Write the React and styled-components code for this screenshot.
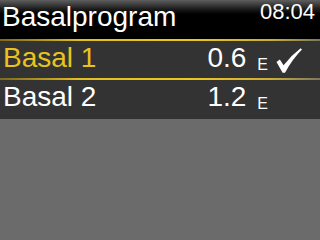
import styled, { createGlobalStyle } from "styled-components";

const Global = createGlobalStyle`
  html, body {
    margin: 0;
    padding: 0;
    background: #6b6b6b;
  }
  body {
    font-family: "Liberation Sans", Arial, sans-serif;
  }
`;

const Screen = styled.div`
  width: 320px;
  height: 240px;
  display: flex;
  flex-direction: column;
  background: #6b6b6b;
  overflow: hidden;
`;

const Header = styled.div`
  height: 39px;
  flex-shrink: 0;
  display: flex;
  justify-content: space-between;
  align-items: flex-start;
  padding: 0 5px 0 2px;
  background: linear-gradient(to bottom, #5e5e5e 0px, #1c1c1c 9px, #000 14px, #000 100%);
  color: #fff;
`;

const Title = styled.div`
  font-size: 28px;
  line-height: 28px;
  padding-top: 3px;
`;

const Clock = styled.div`
  font-size: 22px;
  line-height: 22px;
  padding-top: 1px;
`;

const GoldLine = styled.div`
  height: 2px;
  flex-shrink: 0;
  background: linear-gradient(
    to right,
    #7d6a1c 0%,
    #e4c01f 25%,
    #ecc81e 60%,
    #c9ad38 85%,
    #7c7660 100%
  );
`;

const Row = styled.div`
  height: ${(p) => p.$h}px;
  flex-shrink: 0;
  display: flex;
  align-items: flex-start;
  justify-content: space-between;
  padding: 3px 18px 0 3px;
  box-sizing: border-box;
  background: #333333;
  color: ${(p) => (p.$active ? "#e8c31d" : "#ffffff")};
`;

const Label = styled.div`
  font-size: 28px;
  line-height: 28px;
`;

const Right = styled.div`
  display: flex;
  align-items: flex-start;
  color: #fff;
`;

const Amount = styled.div`
  font-size: 28px;
  line-height: 28px;
  white-space: nowrap;
`;

const Unit = styled.span`
  font-size: 16px;
  margin-left: 11px;
  vertical-align: -3px;
`;

const CheckSlot = styled.div`
  width: 26px;
  height: 25px;
  margin-left: 8px;
  margin-top: 4px;
`;

const Rest = styled.div`
  flex: 1;
  background: #6b6b6b;
`;

function Check() {
  return (
    <svg width="26" height="25" viewBox="0 0 26 25">
      <path
        d="M0.5 14 L3.8 11.6 L7.6 17.2 Q15 7.5 24.6 0.2 L26 1.6 Q16.5 11 9 24.8 L6.6 24.8 Z"
        fill="#fff"
      />
    </svg>
  );
}

const programs = [
  { name: "Basal 1", amount: "0.6", active: true, h: 37 },
  { name: "Basal 2", amount: "1.2", active: false, h: 39 },
];

export default function App() {
  return (
    <>
      <Global />
      <Screen>
        <Header>
          <Title>Basalprogram</Title>
          <Clock>08:04</Clock>
        </Header>
        {programs.map((p) => (
          <div key={p.name} style={{ display: "contents" }}>
            {p.active && <GoldLine />}
            <Row $active={p.active} $h={p.h}>
              <Label>{p.name}</Label>
              <Right>
                <Amount>
                  {p.amount}
                  <Unit>E</Unit>
                </Amount>
                <CheckSlot>{p.active && <Check />}</CheckSlot>
              </Right>
            </Row>
            {p.active && <GoldLine />}
          </div>
        ))}
        <Rest />
      </Screen>
    </>
  );
}
